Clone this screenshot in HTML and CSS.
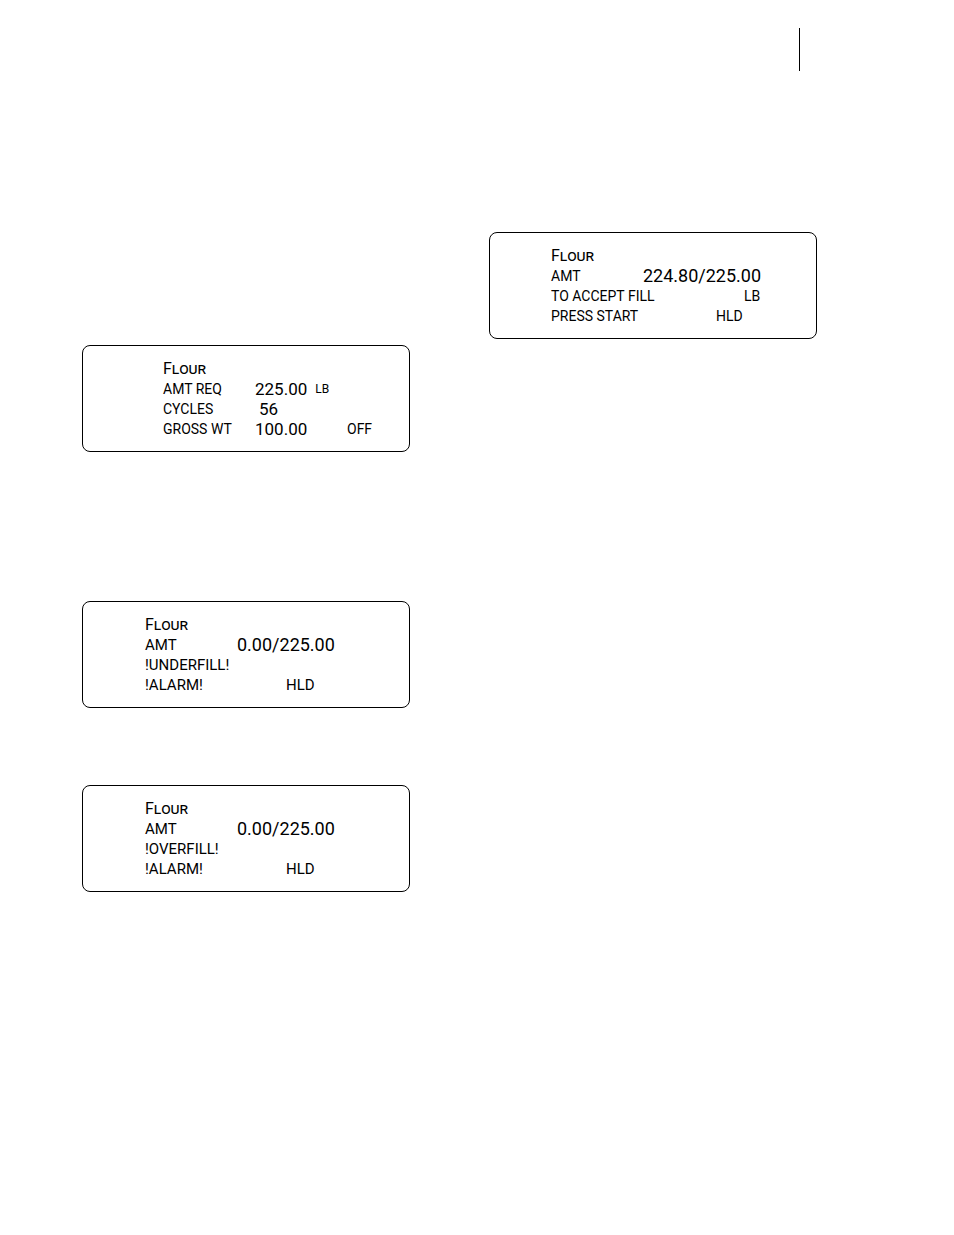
FILE: index.html
```html
<!DOCTYPE html>
<html lang="en">
<head>
  <meta charset="UTF-8" />
  <title>Flour fill displays</title>
  <link rel="stylesheet" href="styles.css">
</head>
<body>

<header class="page-header"></header>

<main class="columns">
  <!-- LEFT COLUMN -->
  <div class="column column-left">
    <section class="display setup">
      <div class="row"><span class="name">Flour</span></div>
      <div class="row"><span class="label">AMT REQ</span><span class="number">225.00</span><span class="unit">LB</span></div>
      <div class="row"><span class="label">CYCLES</span><span class="number indent">56</span></div>
      <div class="row"><span class="label">GROSS WT</span><span class="number gross">100.00</span><span>OFF</span></div>
    </section>

    <section class="display alarm">
      <div class="row"><span class="name">Flour</span></div>
      <div class="row"><span class="label">AMT</span><span class="number reading">0.00/225.00</span></div>
      <div class="row"><span>!UNDERFILL!</span></div>
      <div class="row"><span class="label status">!ALARM!</span><span>HLD</span></div>
    </section>

    <section class="display alarm">
      <div class="row"><span class="name">Flour</span></div>
      <div class="row"><span class="label">AMT</span><span class="number reading">0.00/225.00</span></div>
      <div class="row"><span>!OVERFILL!</span></div>
      <div class="row"><span class="label status">!ALARM!</span><span>HLD</span></div>
    </section>
  </div>

  <!-- RIGHT COLUMN -->
  <div class="column column-right">
    <section class="display accept">
      <div class="row"><span class="name">Flour</span></div>
      <div class="row"><span class="label">AMT</span><span class="number reading">224.80/225.00</span></div>
      <div class="row"><span class="label message">TO ACCEPT FILL</span><span>LB</span></div>
      <div class="row"><span class="label status">PRESS START</span><span>HLD</span></div>
    </section>
  </div>
</main>

</body>
</html>
```

FILE: styles.css
```css
body {
  margin: 0;
  padding: 28px 137px 0 82px;
  background-color: #fff;
  color: #000;
  font-family: Roboto, "Liberation Sans", sans-serif;
  font-size: 14px;
}

/* Short rule at the top right */
.page-header {
  height: 43px;
  margin-right: 17px;
  border-right: 1px solid #000;
}

.columns {
  display: grid;
  grid-template-columns: 1fr 1fr;
  gap: 79px;
}
.column-left {
  padding-top: 274px;
}
.column-right {
  padding-top: 161px;
}

/* Display panels */
.display {
  padding: 13px 0 12px 62px;
  border: 1px solid #000;
  border-radius: 8px;
}
.setup {
  padding-left: 80px;
  margin-bottom: 149px;
}
.alarm {
  margin-bottom: 77px;
  font-size: 15px;
}
.accept {
  padding-left: 61px;
}
.row {
  display: flex;
  height: 20px;
  line-height: 20px;
  white-space: nowrap;
}
.label {
  flex: 0 0 92px;
}
.name {
  font-size: 16px;
  font-variant: small-caps;
}
.number {
  font-size: 17px;
}
.reading {
  font-size: 18px;
}
.indent {
  padding-left: 4px;
}
.gross {
  flex: 0 0 92px;
}
.unit {
  margin-left: 8px;
  font-size: 12px;
}
.status {
  flex-basis: 141px;
}
.accept .status {
  flex-basis: 165px;
}
.message {
  flex-basis: 193px;
}
```
